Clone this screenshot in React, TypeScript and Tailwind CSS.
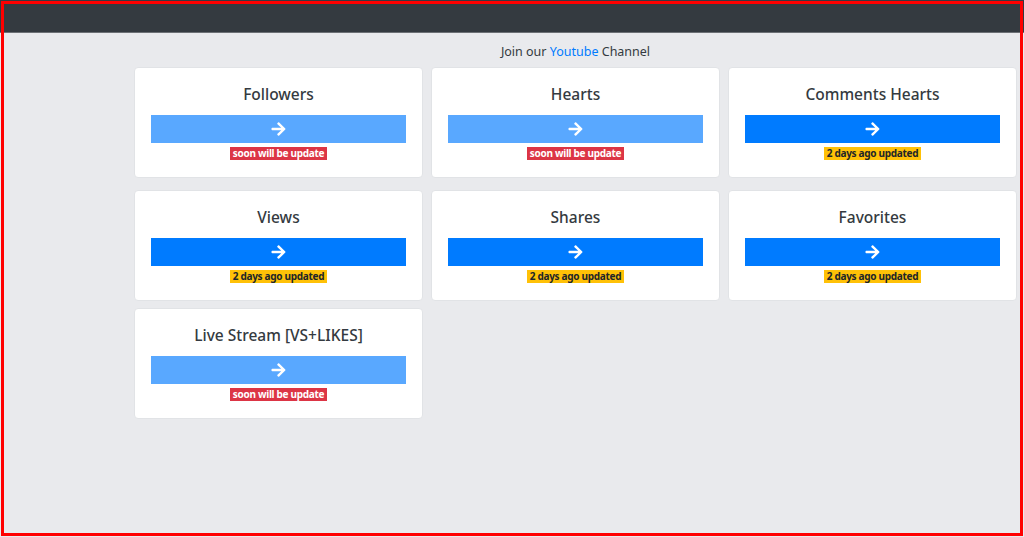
type Service = {
  title: string
  ready: boolean
}

const services: Service[][] = [
  [
    { title: 'Followers', ready: false },
    { title: 'Hearts', ready: false },
    { title: 'Comments Hearts', ready: true },
  ],
  [
    { title: 'Views', ready: true },
    { title: 'Shares', ready: true },
    { title: 'Favorites', ready: true },
  ],
  [{ title: 'Live Stream [VS+LIKES]', ready: false }],
]

function ArrowRight() {
  return (
    <svg viewBox="0 0 448 512" className="w-[15px] h-[16px]" fill="currentColor">
      <path d="M190.5 66.9l22.2-22.2c9.4-9.4 24.6-9.4 33.9 0L441 239c9.4 9.4 9.4 24.6 0 33.9L246.6 467.3c-9.4 9.4-24.6 9.4-33.9 0l-22.2-22.2c-9.5-9.5-9.3-25 .4-34.3L311.4 296H24c-13.3 0-24-10.7-24-24v-32c0-13.3 10.7-24 24-24h287.4L190.9 101.2c-9.8-9.3-10-24.8-.4-34.3z" />
    </svg>
  )
}

function ServiceCard({ service }: { service: Service }) {
  return (
    <div className="bg-white border border-[#e1e3e6] rounded-[4px] h-[111px] px-4 pt-[16px] flex flex-col items-center">
      <h5 className="text-[15.5px] leading-[20px] font-medium text-[#343a40] mb-[11px]">{service.title}</h5>
      <button
        className={`w-full h-[28px] flex items-center justify-center text-white ${
          service.ready ? 'bg-[#007bff]' : 'bg-[#59a8ff]'
        }`}
      >
        <ArrowRight />
      </button>
      {service.ready ? (
        <span className="mt-[4px] bg-[#ffc107] text-[#212529] text-[10px] leading-[13px] font-bold tracking-[-0.3px] px-[3px]">
          2 days ago updated
        </span>
      ) : (
        <span className="mt-[4px] bg-[#dc3545] text-white text-[10px] leading-[13px] font-bold tracking-[-0.3px] px-[3px]">
          soon will be update
        </span>
      )}
    </div>
  )
}

export default function App() {
  return (
    <div className="relative w-[1024px] h-[537px] overflow-hidden bg-[#e9eaed] font-['Noto_Sans',sans-serif]">
      <nav className="h-[33px] bg-[#343a40] border-b border-[#6c7075]" />
      <div className="pl-[134px] pr-[7px]">
        <p className="text-center text-[12.5px] leading-[17px] text-[#343a40] mt-[10px] mb-[7px]">
          Join our <span className="text-[#007bff]">Youtube</span> Channel
        </p>
        <div className="grid grid-cols-3 gap-x-[8px] mb-[12px]">
          {services[0].map((s) => (
            <ServiceCard key={s.title} service={s} />
          ))}
        </div>
        <div className="grid grid-cols-3 gap-x-[8px] gap-y-[7px]">
          {[...services[1], ...services[2]].map((s) => (
            <ServiceCard key={s.title} service={s} />
          ))}
        </div>
      </div>
      <div className="absolute left-[1px] top-[1px] w-[1022px] h-[535px] border-[3px] border-[#ff0000] pointer-events-none" />
    </div>
  )
}
